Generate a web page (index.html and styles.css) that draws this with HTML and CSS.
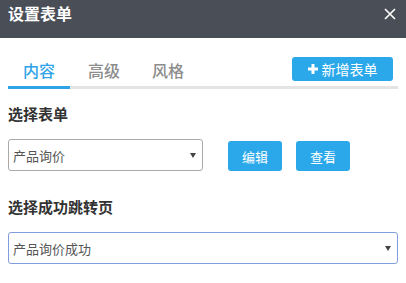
FILE: index.html
```html
<!DOCTYPE html>
<html>
<head>
<meta charset="utf-8">
<link rel="stylesheet" href="styles.css">
</head>
<body>
<div class="dialog">
  <div class="header">
    <span class="title">设置表单</span>
    <svg class="close" width="12" height="12" viewBox="0 0 12 12"><path d="M1 1L11 11M11 1L1 11" stroke="#fff" stroke-width="1.6"/></svg>
  </div>
  <div class="body">
    <div class="tabbar">
      <div class="tabs">
        <span class="tab active">内容</span>
        <span class="tab">高级</span>
        <span class="tab">风格</span>
      </div>
      <button class="btn add"><svg width="10" height="10" viewBox="0 0 10 10"><path d="M3.5 0h3v3.5H10v3H6.5V10h-3V6.5H0v-3h3.5z" fill="#fff"/></svg>新增表单</button>
    </div>
    <div class="label first">选择表单</div>
    <div class="row">
      <div class="select short"><span>产品询价</span><i class="arrow"></i></div>
      <button class="btn small">编辑</button>
      <button class="btn small">查看</button>
    </div>
    <div class="label second">选择成功跳转页</div>
    <div class="select wide focus"><span>产品询价成功</span><i class="arrow"></i></div>
  </div>
</div>
</body>
</html>
```
FILE: styles.css
```css
* { box-sizing: border-box; }
html, body { margin: 0; padding: 0; background: #fff; }
body { font-family: "Noto Sans CJK SC", "Noto Sans", sans-serif; width: 406px; height: 283px; overflow: hidden; }
.header { height: 38px; background: #4a4e57; display: flex; align-items: flex-start; justify-content: space-between; padding: 0 10px 0 8px; }
.title { color: #fff; font-size: 16px; font-weight: bold; line-height: 26px; }
.close { margin-top: 8px; }
.body { padding: 0 8px; }
.tabbar { display: flex; justify-content: space-between; align-items: flex-start; border-bottom: 3px solid #e4e4e4; height: 51px; padding-top: 21px; position: relative; }
.tabs { display: flex; }
.tab { font-size: 16px; color: #8c8c8c; line-height: 22px; width: 64px; text-align: center; height: 27px; font-weight: 500; }
.tab.active { color: #2ea3e6; border-bottom: 3px solid #2ea3e6; width: 62px; height: 30px; margin-right: 2px; }
.btn { background: #2ba8ea; color: #fff; border: none; border-radius: 3px; font-family: inherit; font-size: 13px; padding: 0; }
.add { width: 101px; height: 24px; margin-top: -2px; margin-right: 5px; display: flex; align-items: center; justify-content: center; gap: 4px; font-size: 14px; }
.label { font-size: 15px; font-weight: bold; color: #333; line-height: 22px; }
.label.first { margin-top: 14px; }
.label.second { margin-top: 25px; }
.row { display: flex; align-items: flex-start; margin-top: 14px; }
.select { border: 1px solid #aaa; border-radius: 3px; height: 32px; display: flex; align-items: center; justify-content: space-between; padding: 0 6px 0 4px; font-size: 13px; color: #555; }
.select.short { width: 195px; }
.select.wide { width: 390px; margin-top: 14px; }
.select.focus { border-color: #7f9ee0; }
.arrow { width: 0; height: 0; border-left: 3px solid transparent; border-right: 3px solid transparent; border-top: 5px solid #444; }
.small { width: 54px; height: 30px; margin-top: 2px; }
.row .short { margin-right: 25px; }
.row .small + .small { margin-left: 14px; }
```
